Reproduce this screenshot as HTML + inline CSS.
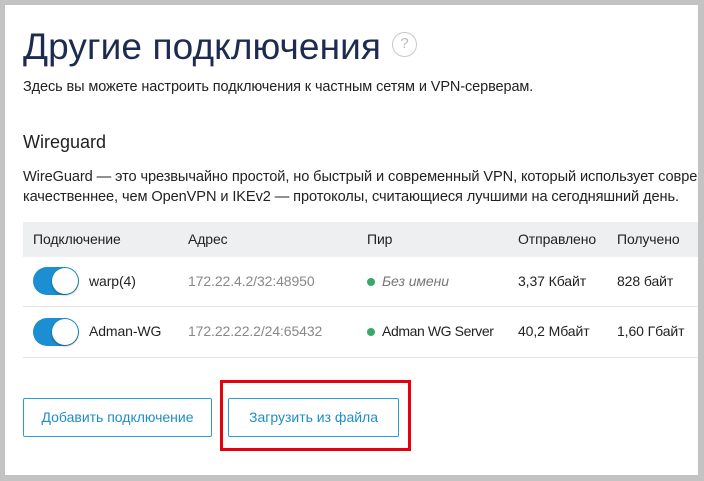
<!DOCTYPE html>
<html><head><meta charset="utf-8"><style>
*{margin:0;padding:0;box-sizing:border-box}
body{width:704px;height:481px;background:#c3c3c3;font-family:"Liberation Sans",sans-serif;position:relative;overflow:hidden}
.panel{position:absolute;left:5px;top:5px;width:693px;height:470px;background:#fff;overflow:hidden}
.a{position:absolute;white-space:nowrap}
h1{position:absolute;left:18px;top:21px;font-size:37px;font-weight:normal;color:#1c2b4f;letter-spacing:0.1px}
.q{position:absolute;left:387px;top:27px;width:25px;height:25px;border:1.5px solid #c8c8c8;border-radius:50%;color:#bbb;font-size:15px;text-align:center;line-height:22px}
.t{font-size:14px;color:#222;letter-spacing:-0.1px}
.hdr{position:absolute;left:18px;top:217px;width:680px;height:35px;background:#eeeff0}
.line{position:absolute;left:18px;width:680px;height:1px;background:#e4e4e4}
.tog{position:absolute;width:46px;height:28px;border-radius:14px;background:#1b8fd1}
.tog::after{content:"";position:absolute;right:1px;top:1px;width:26px;height:26px;border-radius:50%;background:#fff;box-shadow:0 1px 2px rgba(0,0,0,.4)}
.dot{display:inline-block;width:8px;height:8px;border-radius:50%;background:#3aa86b;margin-right:7px;vertical-align:0}
.btn{position:absolute;height:39px;border:1px solid #2a9fd6;border-radius:2px;color:#1e8ec8;font-size:14px;text-align:center;line-height:37px}
.red{position:absolute;left:215px;top:375px;width:191px;height:71px;border:3px solid #e8000f}
</style></head><body><div class="panel">
<h1>Другие подключения</h1>
<div class="q">?</div>
<div class="a t" style="left:18px;top:74px;font-size:14.5px">Здесь вы можете настроить подключения к частным сетям и VPN-серверам.</div>
<div class="a" style="left:18px;top:127px;font-size:18px;color:#222">Wireguard</div>
<div class="a t" style="left:18px;top:164px;font-size:14.6px">WireGuard — это чрезвычайно простой, но быстрый и современный VPN, который использует современные</div>
<div class="a t" style="left:18px;top:184px;font-size:14.6px">качественнее, чем OpenVPN и IKEv2 — протоколы, считающиеся лучшими на сегодняшний день.</div>
<div class="hdr"></div>
<div class="a t" style="left:28px;top:226px">Подключение</div>
<div class="a t" style="left:183px;top:226px">Адрес</div>
<div class="a t" style="left:362px;top:226px">Пир</div>
<div class="a t" style="left:513px;top:226px">Отправлено</div>
<div class="a t" style="left:612px;top:226px">Получено</div>
<div class="tog" style="left:28px;top:262px"></div>
<div class="a t" style="left:84px;top:268px">warp(4)</div>
<div class="a t" style="left:183px;top:268px;color:#888">172.22.4.2/32:48950</div>
<div class="a t" style="left:362px;top:268px;color:#777;font-style:italic"><span class="dot"></span>Без имени</div>
<div class="a t" style="left:513px;top:268px">3,37 Кбайт</div>
<div class="a t" style="left:612px;top:268px">828 байт</div>
<div class="line" style="top:301px"></div>
<div class="tog" style="left:28px;top:313px"></div>
<div class="a t" style="left:84px;top:318px">Adman-WG</div>
<div class="a t" style="left:183px;top:318px;color:#888">172.22.22.2/24:65432</div>
<div class="a t" style="left:362px;top:318px;letter-spacing:-0.4px"><span class="dot"></span>Adman WG Server</div>
<div class="a t" style="left:513px;top:318px">40,2 Мбайт</div>
<div class="a t" style="left:612px;top:318px">1,60 Гбайт</div>
<div class="line" style="top:352px"></div>
<div class="btn" style="left:18px;top:393px;width:189px">Добавить подключение</div>
<div class="btn" style="left:223px;top:393px;width:171px">Загрузить из файла</div>
<div class="red"></div>
</div></body></html>
